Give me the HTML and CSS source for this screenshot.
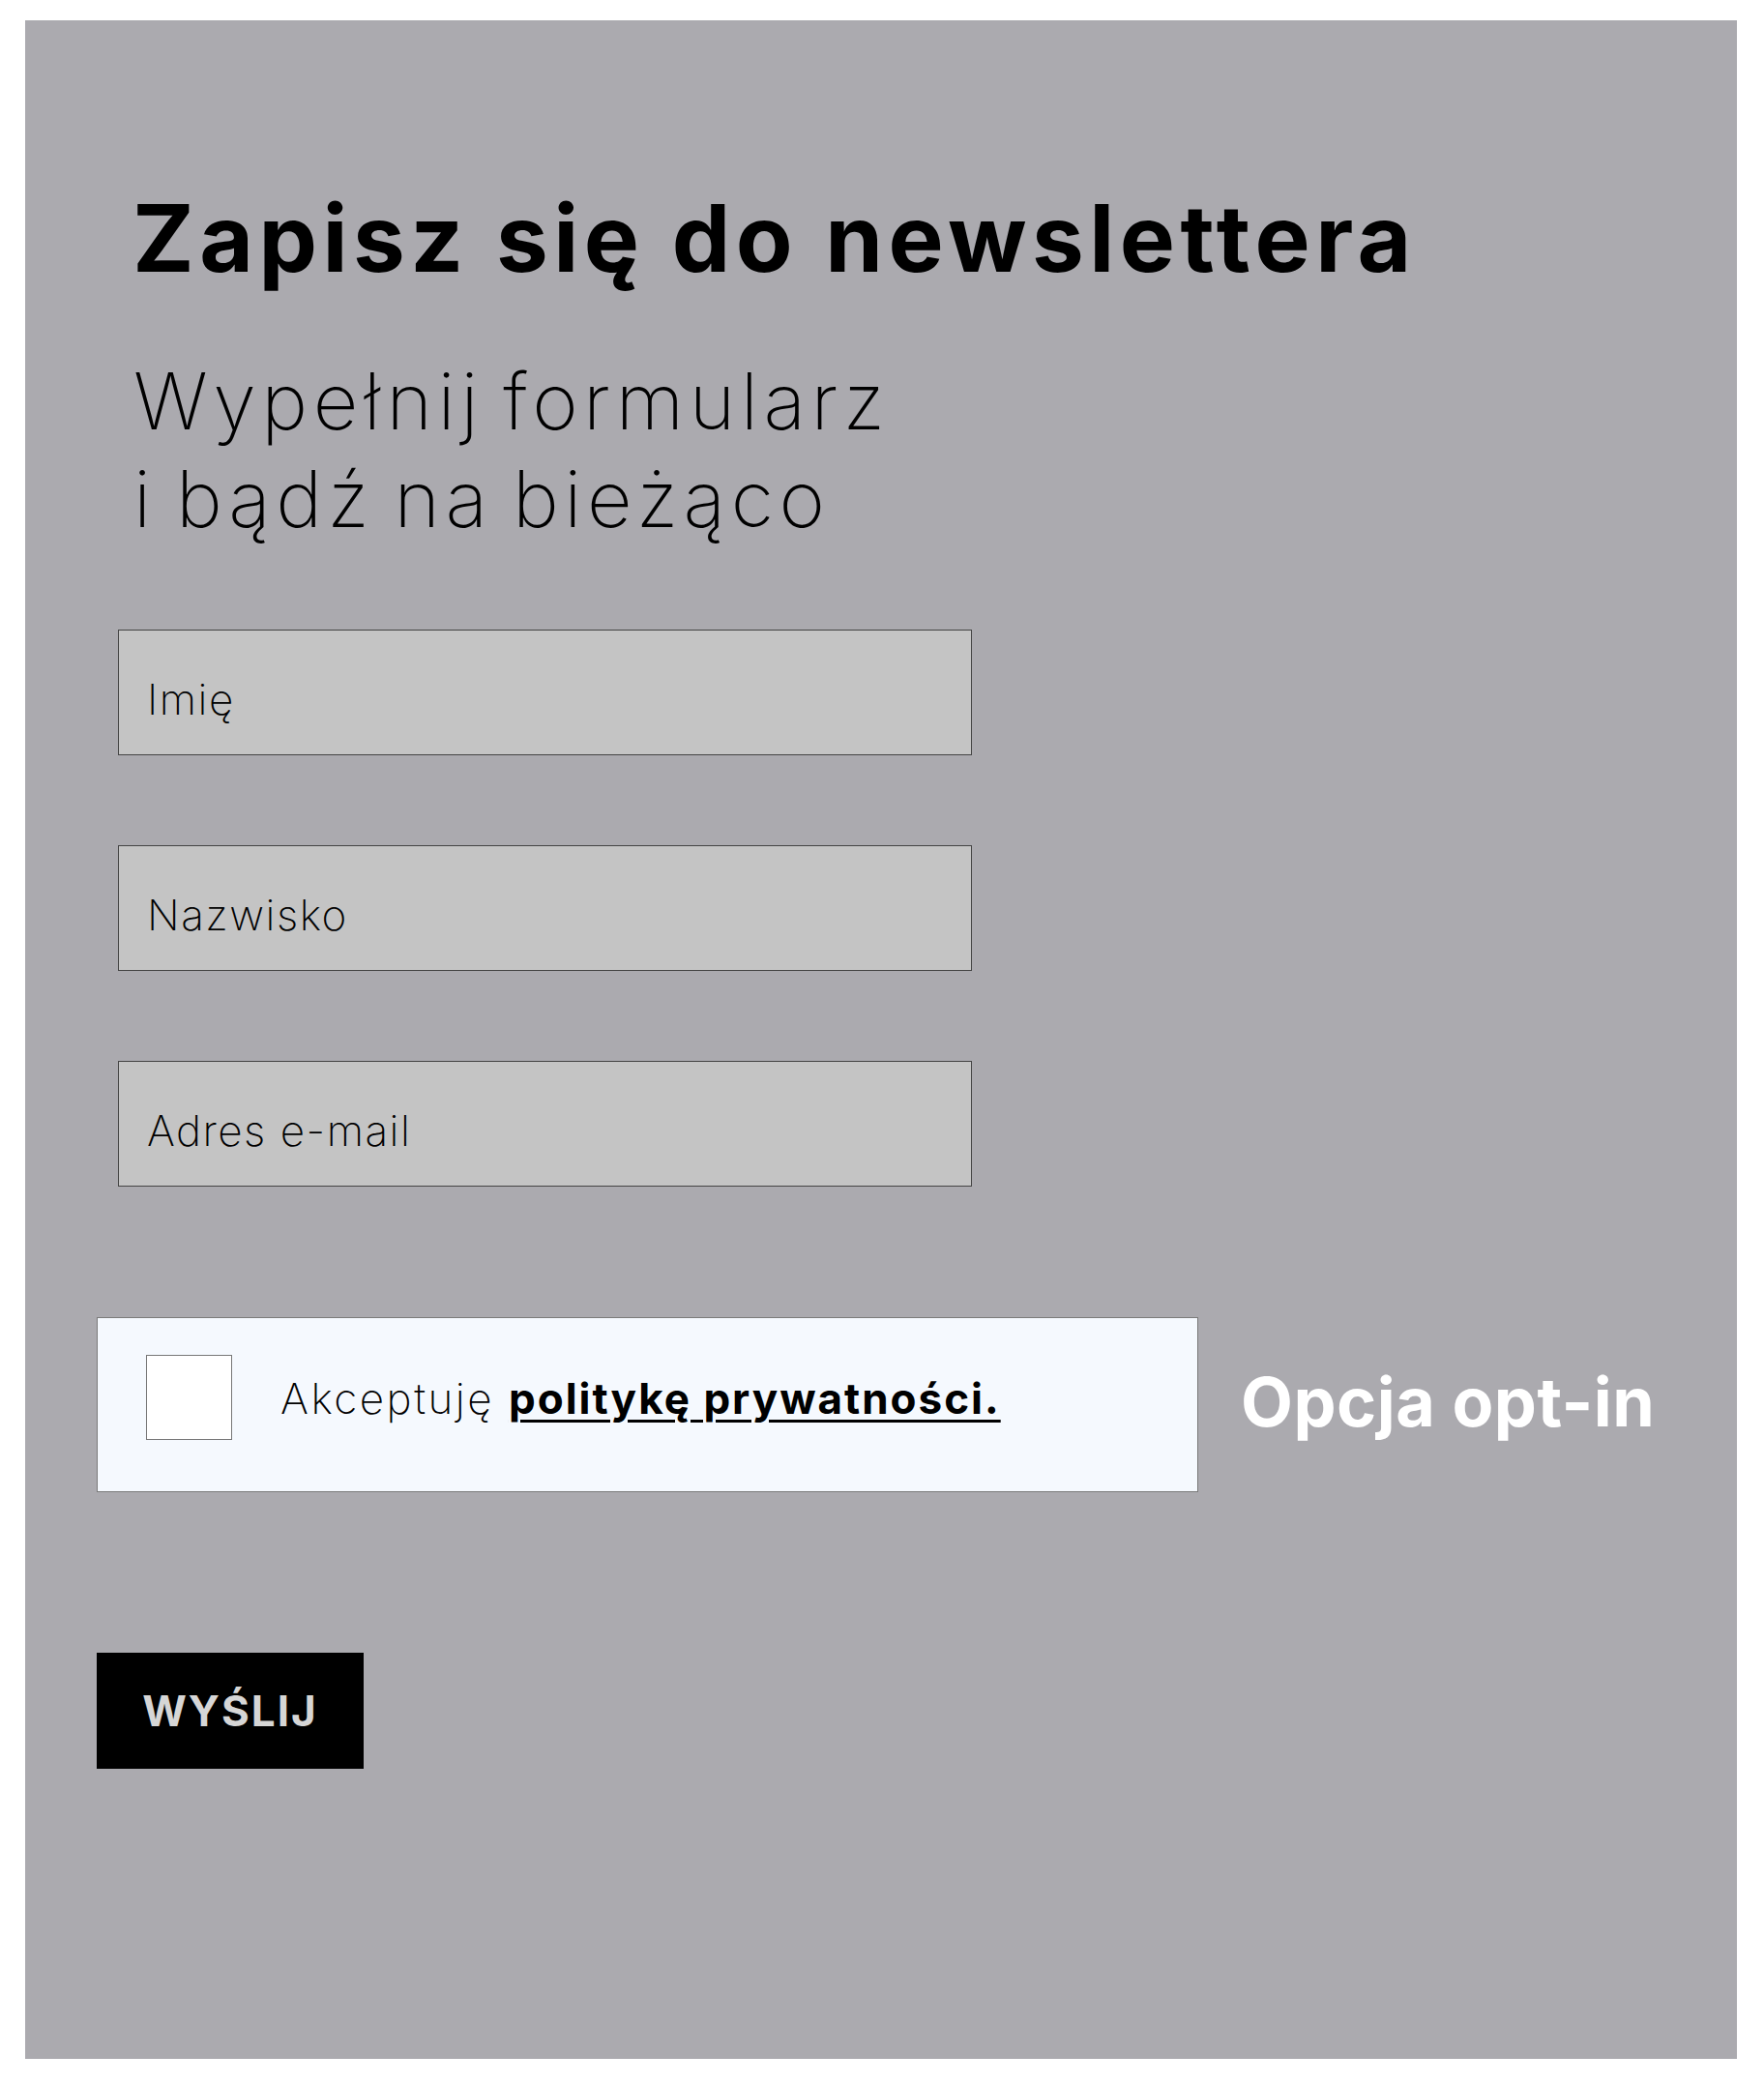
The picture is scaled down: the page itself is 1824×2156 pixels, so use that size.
FILE: index.html
```html
<!DOCTYPE html>
<html lang="pl">
<head>
    <meta charset="UTF-8">
    <meta name="viewport" content="width=device-width, initial-scale=1.0">
    <title>Newsletter</title>
    <link rel="stylesheet" href="styles.css">
</head>
<body>
    <div class="panel">
        <h1 class="title">Zapisz się do newslettera</h1>
        <p class="lead">Wypełnij formularz<br>i bądź na bieżąco</p>
        <form class="signup" id="signupForm">
            <input class="field" type="text" name="first" placeholder="Imię">
            <input class="field" type="text" name="last" placeholder="Nazwisko">
            <input class="field" type="email" name="email" placeholder="Adres e-mail">
            <div class="consent-row">
                <label class="consent">
                    <input class="check" type="checkbox" name="agree">
                    <span class="consent-text">Akceptuję <a href="#" class="policy">politykę prywatności.</a></span>
                </label>
                <span class="optin">Opcja opt-in</span>
            </div>
            <button class="send" type="submit">WYŚLIJ</button>
        </form>
    </div>
</body>
</html>
```

FILE: styles.css
```css
body {
    margin: 0;
    padding: 21px 28px 27px 26px;
    font-family: Inter, "Noto Sans", sans-serif;
    color: #000;
    background: #fff;
}
.panel {
    background-color: #abaaaf;
    padding: 168px 0 300px 74px;
}
.title {
    margin: 0 0 0 37px;
    font-size: 96px;
    font-weight: 700;
    line-height: 115px;
    letter-spacing: 5.5px;
}
.lead {
    margin: 61px 0 0 38px;
    font-size: 81px;
    font-weight: 200;
    line-height: 101px;
    letter-spacing: 5.5px;
    word-spacing: -8px;
}
.signup {
    display: flex;
    flex-direction: column;
    align-items: flex-start;
    margin-top: 84px;
}
.field {
    box-sizing: border-box;
    width: 883px;
    height: 130px;
    margin: 0 0 93px 22px;
    padding: 14px 0 0 29px;
    border: 1px solid #444;
    border-radius: 0;
    background-color: #c4c4c4;
    font-family: inherit;
    font-size: 44px;
    font-weight: 200;
    letter-spacing: 1.5px;
    color: #000;
    outline: none;
}
.field::placeholder {
    color: #000;
    opacity: 1;
}
.field:last-of-type {
    margin-bottom: 135px;
}
.consent-row {
    display: flex;
    align-items: center;
    gap: 44px;
}
.consent {
    box-sizing: border-box;
    display: flex;
    align-items: flex-start;
    gap: 50px;
    width: 1139px;
    height: 181px;
    padding: 38px 0 0 50px;
    border: 1px solid #7a7a7a;
    background-color: #f5f9fe;
    cursor: pointer;
}
.check {
    appearance: none;
    flex: none;
    width: 89px;
    height: 88px;
    margin: 0;
    border: 1px solid #777;
    background: #fff;
}
.check:checked {
    background: #000;
}
.consent-text {
    margin-top: 18px;
    font-size: 44px;
    font-weight: 200;
    letter-spacing: 2.5px;
}
.policy {
    color: #000;
    font-weight: 700;
    letter-spacing: 2px;
    text-decoration: underline;
    text-decoration-thickness: 3px;
    text-underline-offset: 6px;
}
.optin {
    margin-bottom: 7px;
    font-size: 70px;
    font-weight: 700;
    letter-spacing: 0.5px;
    color: #fff;
}
.send {
    width: 276px;
    height: 120px;
    margin-top: 166px;
    border: none;
    background-color: #000;
    color: #d6d6d6;
    font-family: inherit;
    font-size: 44px;
    font-weight: 700;
    letter-spacing: 2px;
    cursor: pointer;
}
```
